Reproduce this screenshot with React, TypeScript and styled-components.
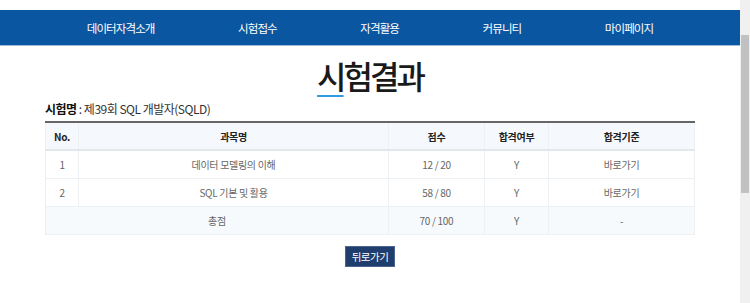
import styled, { createGlobalStyle } from "styled-components"

const GlobalStyle = createGlobalStyle`
  html, body {
    margin: 0;
    padding: 0;
    background: #fff;
    overflow: hidden;
  }
  body {
    font-family: "Noto Sans CJK KR", "Noto Sans", sans-serif;
  }
`

const Frame = styled.div`
  display: flex;
  width: 750px;
  height: 303px;
`

const Page = styled.div`
  flex: 1;
  display: flex;
  flex-direction: column;
  padding-top: 10px;
`

const ScrollTrack = styled.div`
  width: 9px;
  background: #f0f0f0;
  padding: 35px 1px 0 1px;
`

const ScrollThumb = styled.div`
  height: 158px;
  background: #c1c1c1;
`

const Nav = styled.nav`
  height: 35px;
  background: #0a56a1;
  border-bottom: 1px solid #9fbde0;
  display: flex;
  justify-content: center;
`

const Menu = styled.ul`
  width: 650px;
  margin: 0;
  padding: 0;
  list-style: none;
  display: flex;
  justify-content: space-around;
  align-items: center;
`

const MenuItem = styled.li`
  color: #fff;
  font-size: 11.5px;
  letter-spacing: -0.9px;
`

const Title = styled.h2`
  margin: 6px 0 2px;
  text-align: center;
  font-size: 32px;
  font-weight: 500;
  line-height: 46px;
  letter-spacing: -3px;
  color: #1a1a1a;
`

const Accent = styled.span`
  text-decoration: underline;
  text-decoration-color: #2f9be0;
  text-decoration-thickness: 2px;
  text-underline-offset: 6px;
`

const Content = styled.div`
  padding: 0 45px;
`

const ExamName = styled.p`
  margin: 0 0 4px;
  font-size: 12px;
  letter-spacing: -0.5px;
  color: #333;
  b {
    color: #111;
    font-weight: 700;
  }
`

const Table = styled.table`
  width: 650px;
  table-layout: fixed;
  border-collapse: collapse;
  border-top: 2px solid #666;
  font-size: 10px;
  letter-spacing: -0.3px;
`

const Th = styled.th<{ $w?: number }>`
  height: 26px;
  padding: 0;
  background: #f5f8fc;
  border-bottom: 2px solid #e3e7ec;
  border-left: 1px solid #eef1f4;
  border-right: 1px solid #eef1f4;
  color: #222;
  font-weight: 700;
  width: ${(p) => (p.$w ? `${p.$w}px` : "auto")};
`

const Td = styled.td<{ $total?: boolean }>`
  height: 27px;
  padding: 0;
  text-align: center;
  color: #666;
  border: 1px solid #eef1f4;
  background: ${(p) => (p.$total ? "#f7fafd" : "#fff")};
`

const Actions = styled.div`
  display: flex;
  justify-content: center;
  margin-top: 11px;
`

const BackButton = styled.button`
  height: 21px;
  padding: 0 6px;
  background: #1f3e6d;
  border: 1px solid #4a6592;
  color: #fff;
  font-family: inherit;
  font-size: 10.5px;
  letter-spacing: -0.5px;
`

const menu = ["데이터자격소개", "시험접수", "자격활용", "커뮤니티", "마이페이지"]

const rows = [
  { no: 1, subject: "데이터 모델링의 이해", score: "12 / 20", pass: "Y", rule: "바로가기" },
  { no: 2, subject: "SQL 기본 및 활용", score: "58 / 80", pass: "Y", rule: "바로가기" },
]

export default function App() {
  return (
    <>
      <GlobalStyle />
      <Frame>
        <Page>
          <Nav>
            <Menu>
              {menu.map((m) => (
                <MenuItem key={m}>{m}</MenuItem>
              ))}
            </Menu>
          </Nav>
          <Title>
            <Accent>시</Accent>험결과
          </Title>
          <Content>
            <ExamName>
              <b>시험명</b> : 제39회 SQL 개발자(SQLD)
            </ExamName>
            <Table>
              <thead>
                <tr>
                  <Th $w={32}>No.</Th>
                  <Th>과목명</Th>
                  <Th $w={95}>점수</Th>
                  <Th $w={63}>합격여부</Th>
                  <Th $w={145}>합격기준</Th>
                </tr>
              </thead>
              <tbody>
                {rows.map((r) => (
                  <tr key={r.no}>
                    <Td>{r.no}</Td>
                    <Td>{r.subject}</Td>
                    <Td>{r.score}</Td>
                    <Td>{r.pass}</Td>
                    <Td>{r.rule}</Td>
                  </tr>
                ))}
                <tr>
                  <Td $total colSpan={2}>총점</Td>
                  <Td $total>70 / 100</Td>
                  <Td $total>Y</Td>
                  <Td $total>-</Td>
                </tr>
              </tbody>
            </Table>
            <Actions>
              <BackButton type="button">뒤로가기</BackButton>
            </Actions>
          </Content>
        </Page>
        <ScrollTrack>
          <ScrollThumb />
        </ScrollTrack>
      </Frame>
    </>
  )
}
